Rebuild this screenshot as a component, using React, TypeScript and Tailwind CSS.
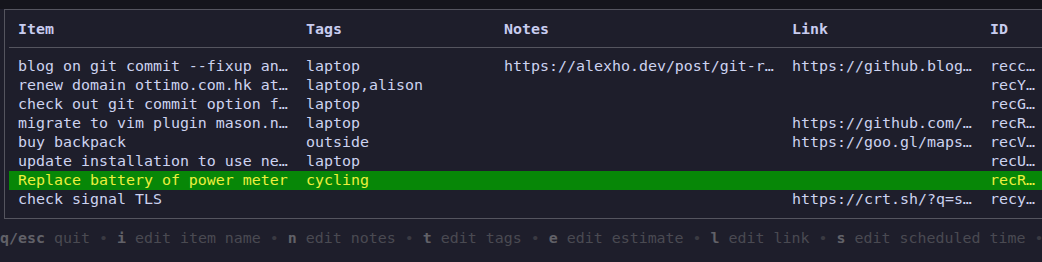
const rows = [
  ["blog on git commit --fixup an…", "laptop", "https://alexho.dev/post/git-r…", "https://github.blog…", "recc…"],
  ["renew domain ottimo.com.hk at…", "laptop,alison", "", "", "recY…"],
  ["check out git commit option f…", "laptop", "", "", "recG…"],
  ["migrate to vim plugin mason.n…", "laptop", "", "https://github.com/…", "recR…"],
  ["buy backpack", "outside", "", "https://goo.gl/maps…", "recV…"],
  ["update installation to use ne…", "laptop", "", "", "recU…"],
  ["Replace battery of power meter", "cycling", "", "", "recR…"],
  ["check signal TLS", "", "", "https://crt.sh/?q=s…", "recy…"],
];

const selected = 6;

const help: [string, string][] = [
  ["q/esc", "quit"],
  ["i", "edit item name"],
  ["n", "edit notes"],
  ["t", "edit tags"],
  ["e", "edit estimate"],
  ["l", "edit link"],
  ["s", "edit scheduled time"],
];

const cols = "grid grid-cols-[288px_198px_288px_198px_1fr]";

export default function App() {
  return (
    <div
      className="w-[1042px] h-[262px] overflow-hidden bg-[#1e1e2b] text-[14.95px] leading-[19px] whitespace-pre"
      style={{ fontFamily: '"DejaVu Sans Mono", monospace' }}
    >
      <div className="h-[9px] bg-[#15151c]" />
      <div className="ml-[4px] w-[1100px] border-l border-t border-b border-[#55555f] pt-[10px] pb-[9px]">
        <div className={`${cols} pl-[13px] h-[19px] font-bold text-[#c8ccef]`}>
          <div>Item</div>
          <div>Tags</div>
          <div>Notes</div>
          <div>Link</div>
          <div>ID</div>
        </div>
        <div className="ml-[4px] mt-[8px] mb-[9px] h-px bg-[#55555f]" />
        {rows.map((r, i) => (
          <div
            key={i}
            className={`${cols} ml-[4px] pl-[9px] h-[19px] ${
              i === selected ? "bg-[#078707] text-[#ecf03e]" : "text-[#cdd3f0]"
            }`}
          >
            {r.map((c, j) => (
              <div key={j} className="overflow-hidden">
                {c}
              </div>
            ))}
          </div>
        ))}
      </div>
      <div className="mt-[10px] h-[19px] w-[1100px] flex">
        {help.map(([k, d]) => (
          <span key={k}>
            <span className="font-bold text-[#616168]">{k}</span>
            <span className="text-[#4a4a52]"> {d}</span>
            <span className="text-[#3a3a42]">{" • "}</span>
          </span>
        ))}
      </div>
    </div>
  );
}
